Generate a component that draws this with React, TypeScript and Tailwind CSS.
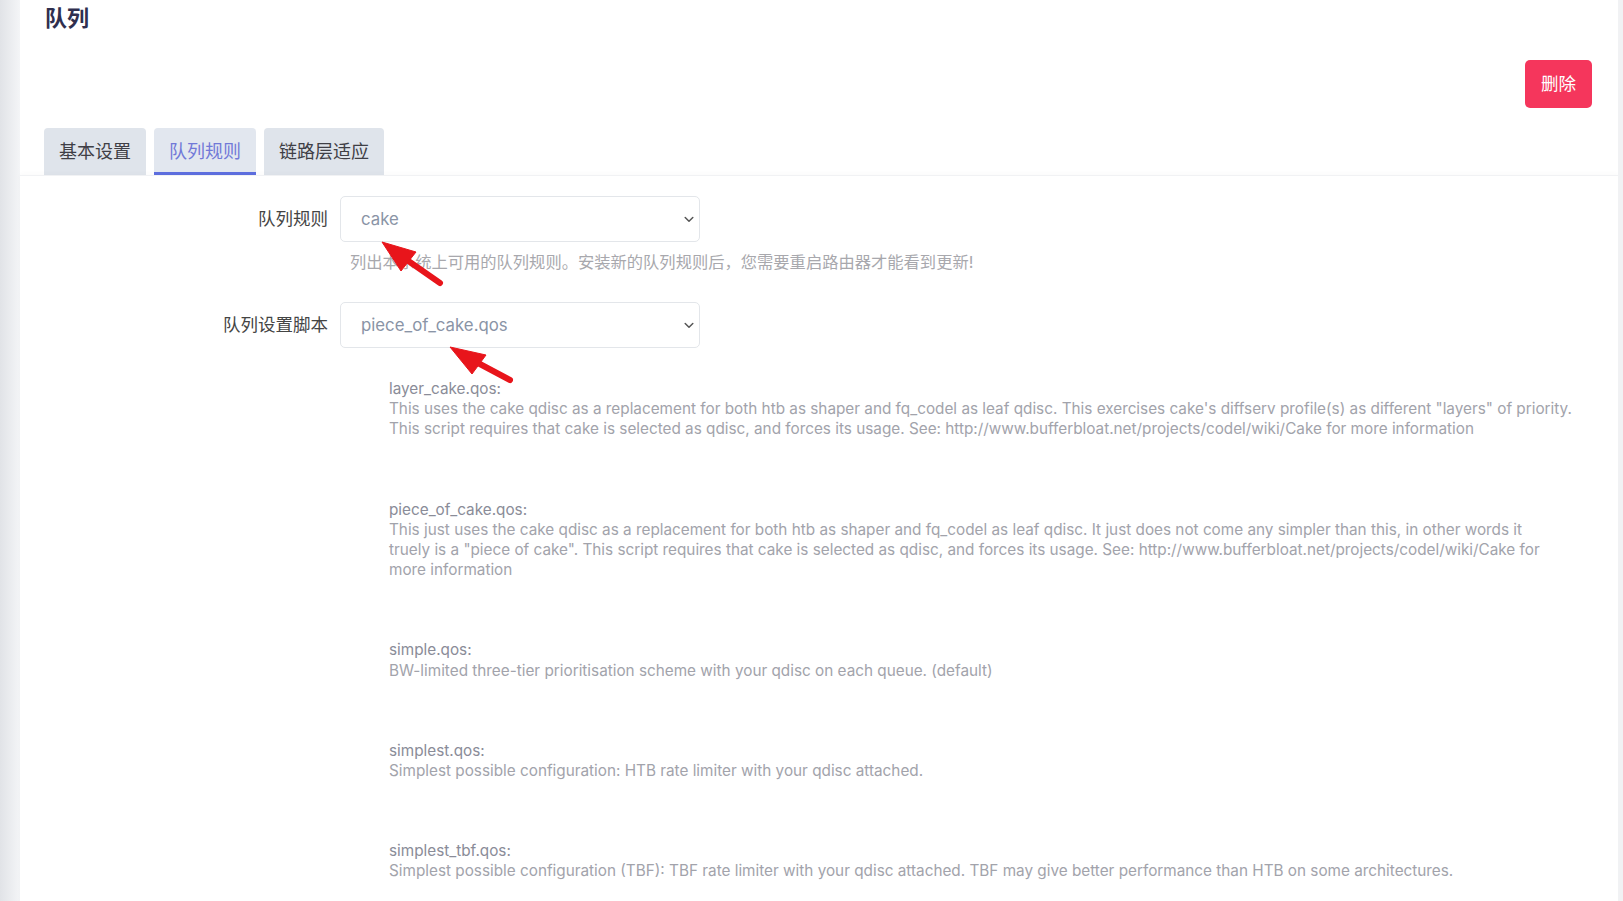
import React from "react";

const FONT = { fontFamily: 'Inter, "Noto Sans CJK SC", "Noto Sans", sans-serif' };

const scripts: { name: string; lines: string[] }[] = [
  {
    name: "layer_cake.qos:",
    lines: [
      'This uses the cake qdisc as a replacement for both htb as shaper and fq_codel as leaf qdisc. This exercises cake\'s diffserv profile(s) as different "layers" of priority.',
      "This script requires that cake is selected as qdisc, and forces its usage. See: http://www.bufferbloat.net/projects/codel/wiki/Cake for more information",
    ],
  },
  {
    name: "piece_of_cake.qos:",
    lines: [
      "This just uses the cake qdisc as a replacement for both htb as shaper and fq_codel as leaf qdisc. It just does not come any simpler than this, in other words it",
      'truely is a "piece of cake". This script requires that cake is selected as qdisc, and forces its usage. See: http://www.bufferbloat.net/projects/codel/wiki/Cake for',
      "more information",
    ],
  },
  {
    name: "simple.qos:",
    lines: ["BW-limited three-tier prioritisation scheme with your qdisc on each queue. (default)"],
  },
  {
    name: "simplest.qos:",
    lines: ["Simplest possible configuration: HTB rate limiter with your qdisc attached."],
  },
  {
    name: "simplest_tbf.qos:",
    lines: [
      "Simplest possible configuration (TBF): TBF rate limiter with your qdisc attached. TBF may give better performance than HTB on some architectures.",
    ],
  },
];

function Chevron() {
  return (
    <svg width="10" height="7" viewBox="0 0 10 7" className="shrink-0">
      <path d="M1.2 1.5 L5 5.2 L8.8 1.5" fill="none" stroke="#555" strokeWidth="1.5" strokeLinecap="round" strokeLinejoin="round" />
    </svg>
  );
}

function FakeSelect({ value }: { value: string }) {
  return (
    <div className="flex h-[46px] w-[360px] items-center justify-between rounded-[5px] border border-[#e3e6ea] bg-white pl-[20px] pr-[5px]">
      <span className="pt-[1px] text-[16.8px] text-[#8a94a6]">{value}</span>
      <Chevron />
    </div>
  );
}

export default function App() {
  return (
    <div className="relative flex h-[901px] w-full overflow-hidden bg-white" style={FONT}>
      <div className="w-[20px] shrink-0 bg-gradient-to-r from-[#e1e3e7] to-[#f4f5f7]" />
      <div className="flex min-w-0 flex-1 flex-col bg-white">
        <div className="flex items-start justify-between">
          <div className="pl-[25px] pt-[2px] text-[22px] font-bold leading-[32px] text-[#2f2f4f]">队列</div>
          <button className="mr-[26px] mt-[60px] flex h-[48px] w-[67px] items-center justify-center rounded-[5px] bg-[#f5365c] text-[17.5px] text-white">
            删除
          </button>
        </div>
        <div className="mt-[20px] flex gap-[8px] pl-[24px]">
          <div className="flex h-[47px] items-center rounded-t-[4px] bg-[#dfe4eb] px-[15px] text-[18px] text-[#3f3f46]">基本设置</div>
          <div className="flex h-[47px] items-center rounded-t-[4px] border-b-[3px] border-[#5e6fe0] bg-[#e2e7ef] px-[15px] pt-[3px] text-[18px] text-[#7179d8]">队列规则</div>
          <div className="flex h-[47px] items-center rounded-t-[4px] bg-[#dfe4eb] px-[15px] text-[18px] text-[#3f3f46]">链路层适应</div>
        </div>
        <div className="flex-1 border-t border-[#f1f2f4] pt-[20px] shadow-[0_-2px_4px_rgba(0,0,0,0.02)]">
          <div className="flex items-center">
            <div className="w-[308px] text-right text-[17.5px] text-[#444]">队列规则</div>
            <div className="ml-[12px]">
              <FakeSelect value="cake" />
            </div>
          </div>
          <div className="ml-[330px] mt-[8px] text-[16.3px] leading-[24px] text-[#a8a8ad]">
            列出本系统上可用的队列规则。安装新的队列规则后，您需要重启路由器才能看到更新!
          </div>
          <div className="mt-[28px] flex items-center">
            <div className="w-[308px] text-right text-[17.5px] text-[#444]">队列设置脚本</div>
            <div className="ml-[12px]">
              <FakeSelect value="piece_of_cake.qos" />
            </div>
          </div>
          <div className="ml-[369px] mt-[31px] w-[1190px] text-[15.3px] leading-[20.2px]">
            {scripts.map((s) => (
              <div key={s.name} className="mb-[60px]">
                <div className="text-[#8a8c98]">{s.name}</div>
                {s.lines.map((l, i) => (
                  <div key={i} className="whitespace-nowrap text-[#a2a3ab]">
                    {l}
                  </div>
                ))}
              </div>
            ))}
          </div>
        </div>
      </div>
      <div className="w-[5px] shrink-0 bg-[#f1f2f4]" />
      <svg className="pointer-events-none absolute left-0 top-0" width="1623" height="901" viewBox="0 0 1623 901">
        <g fill="#e8151b" stroke="#e8151b">
          <line x1="407" y1="260" x2="440" y2="283" strokeWidth="6" strokeLinecap="round" />
          <polygon points="382,242 416,252 401,271" strokeWidth="1" strokeLinejoin="round" />
          <line x1="478" y1="363" x2="510" y2="380" strokeWidth="6" strokeLinecap="round" />
          <polygon points="450,347 486,355 472,374" strokeWidth="1" strokeLinejoin="round" />
        </g>
      </svg>
    </div>
  );
}
